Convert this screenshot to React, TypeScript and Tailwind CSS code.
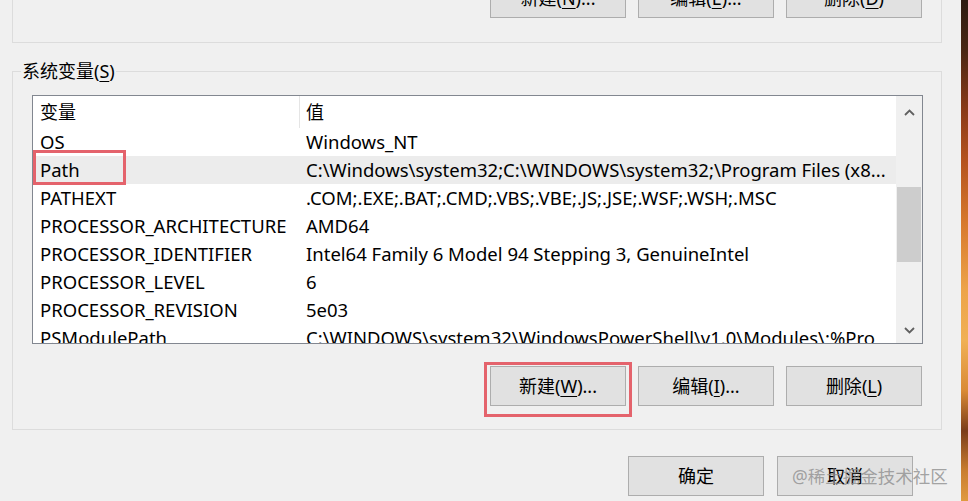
import React from 'react';

type Row = { name: string; value: string; selected?: boolean };

const rows: Row[] = [
  { name: 'OS', value: 'Windows_NT' },
  { name: 'Path', value: 'C:\\Windows\\system32;C:\\WINDOWS\\system32;\\Program Files (x8...', selected: true },
  { name: 'PATHEXT', value: '.COM;.EXE;.BAT;.CMD;.VBS;.VBE;.JS;.JSE;.WSF;.WSH;.MSC' },
  { name: 'PROCESSOR_ARCHITECTURE', value: 'AMD64' },
  { name: 'PROCESSOR_IDENTIFIER', value: 'Intel64 Family 6 Model 94 Stepping 3, GenuineIntel' },
  { name: 'PROCESSOR_LEVEL', value: '6' },
  { name: 'PROCESSOR_REVISION', value: '5e03' },
  { name: 'PSModulePath', value: 'C:\\WINDOWS\\system32\\WindowsPowerShell\\v1.0\\Modules\\;%Pro' },
];

const WinButton = ({ label, hotkey, dots }: { label: string; hotkey?: string; dots?: boolean }) => (
  <div className="flex h-[40px] w-[136px] items-center justify-center border border-[#adadad] bg-[#e1e1e1]">
    <span>
      {label}
      {hotkey && (
        <>
          (<span className="underline underline-offset-[3px]">{hotkey}</span>)
        </>
      )}
      {dots && '...'}
    </span>
  </div>
);

const Chevron = ({ up }: { up?: boolean }) => (
  <svg width="11" height="7" viewBox="0 0 11 7">
    <polyline
      points={up ? '1,6 5.5,1.5 10,6' : '1,1 5.5,5.5 10,1'}
      fill="none"
      stroke="#606060"
      strokeWidth="1.8"
    />
  </svg>
);

export default function App() {
  return (
    <div className="flex h-[501px] w-[968px] overflow-hidden bg-[#f0f0f0] font-['Segoe_UI','Noto_Sans','Noto_Sans_CJK_SC',sans-serif] text-[18px] text-black">
      <div className="relative w-[961px]">
        {/* user variables group, mostly scrolled out of view */}
        <div className="ml-[12px] flow-root h-[43px] w-[930px] border-x border-b border-[#dcdcdc]">
          <div className="-mt-[22px] flex justify-end gap-[12px] pr-[19px]">
            <WinButton label="新建" hotkey="N" dots />
            <WinButton label="编辑" hotkey="E" dots />
            <WinButton label="删除" hotkey="D" />
          </div>
        </div>

        {/* system variables */}
        <fieldset className="ml-[12px] mt-[16px] w-[930px] border border-[#dcdcdc] pb-[23px]">
          <legend className="ml-[8px] px-[1px] leading-[24px]">
            系统变量(<span className="underline underline-offset-[3px]">S</span>)
          </legend>

          <div className="ml-[19px] mt-[12px] flex h-[249px] w-[891px] border border-[#828790] bg-white">
            <div className="flex-1 overflow-hidden text-[18.5px]">
              <div className="flex h-[32px] items-center text-[18px]">
                <div className="flex h-full w-[267px] items-center border-r border-[#e5e5e5] pl-[7px]">变量</div>
                <div className="pl-[6px]">值</div>
              </div>
              {rows.map((r) => (
                <div
                  key={r.name}
                  className={`flex h-[28px] items-center whitespace-nowrap ${r.selected ? 'bg-[#ececec]' : ''}`}
                >
                  <div className="relative w-[267px] pl-[7px]">
                    {r.name}
                    {r.selected && (
                      <div className="absolute -top-[6px] left-0 h-[35px] w-[93px] border-[3px] border-[#e4636c]" />
                    )}
                  </div>
                  <div className="pl-[6px]">{r.value}</div>
                </div>
              ))}
            </div>
            <div className="flex w-[26px] flex-col bg-[#f0f0f0]">
              <div className="flex h-[32px] items-center justify-center">
                <Chevron up />
              </div>
              <div className="ml-[1px] mt-[59px] h-[75px] w-[24px] bg-[#cdcdcd]" />
              <div className="mt-auto flex h-[26px] items-center justify-center">
                <Chevron />
              </div>
            </div>
          </div>

          <div className="mt-[22px] flex justify-end gap-[12px] pr-[19px]">
            <div className="relative">
              <WinButton label="新建" hotkey="W" dots />
              <div className="absolute -bottom-[11px] -left-[6px] -right-[6px] -top-[4px] border-[3px] border-[#e4636c]" />
            </div>
            <WinButton label="编辑" hotkey="I" dots />
            <WinButton label="删除" hotkey="L" />
          </div>
        </fieldset>

        <div className="mt-[26px] flex justify-end gap-[13px] pr-[48px]">
          <WinButton label="确定" />
          <WinButton label="取消" />
        </div>

        <div className="absolute left-[792px] top-[463px] whitespace-nowrap text-[17.5px] text-[#8e8e8e]/80">
          @稀土掘金技术社区
        </div>
      </div>
      <div className="flex-1 bg-[linear-gradient(180deg,#2e1c12_0%,#4a2614_10%,#8a3a18_22%,#b4521f_32%,#d87a2e_45%,#eda44a_58%,#f0b055_68%,#d98a36_78%,#7a3c1a_86%,#c97d30_94%,#e09a40_100%)]" />
    </div>
  );
}
